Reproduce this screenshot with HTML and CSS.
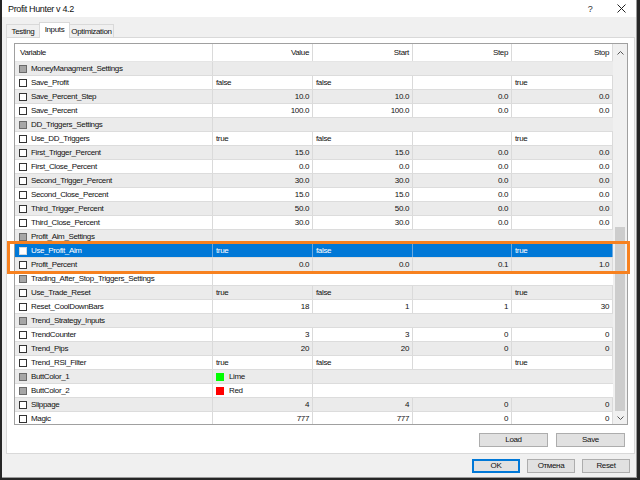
FILE: index.html
```html
<!DOCTYPE html>
<html lang="en">
<head>
  <meta charset="UTF-8">
  <title>Profit Hunter v 4.2</title>
  <link rel="stylesheet" href="styles.css">
</head>
<body>
  <div class="dialog">
    <!-- title bar -->
    <div class="titlebar">
      <span class="title">Profit Hunter v 4.2</span>
      <span class="help">?</span>
      <span class="close">
        <svg width="9" height="9" viewBox="0 0 9 9"><path d="M0.5 0.5 L8.5 8.5 M8.5 0.5 L0.5 8.5" stroke="#222" stroke-width="1" fill="none"/></svg>
      </span>
    </div>

    <!-- tabs -->
    <div class="tabs">
      <div class="tab t-testing">Testing</div>
      <div class="tab t-inputs active">Inputs</div>
      <div class="tab t-optim">Optimization</div>
    </div>

    <div class="panel">
      <div class="list">
        <div class="grid">
          <div class="head">
            <div class="cell">Variable</div>
            <div class="cell num">Value</div>
            <div class="cell num">Start</div>
            <div class="cell num">Step</div>
            <div class="cell num">Stop</div>
          </div>
          <div class="rows">
            <div class="row group"><div class="cell var"><i class="chk grey"></i>MoneyManagment_Settings</div><div class="cell rest"></div></div>
            <div class="row"><div class="cell var"><i class="chk"></i>Save_Profit</div><div class="cell">false</div><div class="cell">false</div><div class="cell"></div><div class="cell">true</div></div>
            <div class="row"><div class="cell var"><i class="chk"></i>Save_Percent_Step</div><div class="cell num">10.0</div><div class="cell num">10.0</div><div class="cell num">0.0</div><div class="cell num">0.0</div></div>
            <div class="row"><div class="cell var"><i class="chk"></i>Save_Percent</div><div class="cell num">100.0</div><div class="cell num">100.0</div><div class="cell num">0.0</div><div class="cell num">0.0</div></div>
            <div class="row group"><div class="cell var"><i class="chk grey"></i>DD_Triggers_Settings</div><div class="cell rest"></div></div>
            <div class="row"><div class="cell var"><i class="chk"></i>Use_DD_Triggers</div><div class="cell">true</div><div class="cell">false</div><div class="cell"></div><div class="cell">true</div></div>
            <div class="row"><div class="cell var"><i class="chk"></i>First_Trigger_Percent</div><div class="cell num">15.0</div><div class="cell num">15.0</div><div class="cell num">0.0</div><div class="cell num">0.0</div></div>
            <div class="row"><div class="cell var"><i class="chk"></i>First_Close_Percent</div><div class="cell num">0.0</div><div class="cell num">0.0</div><div class="cell num">0.0</div><div class="cell num">0.0</div></div>
            <div class="row"><div class="cell var"><i class="chk"></i>Second_Trigger_Percent</div><div class="cell num">30.0</div><div class="cell num">30.0</div><div class="cell num">0.0</div><div class="cell num">0.0</div></div>
            <div class="row"><div class="cell var"><i class="chk"></i>Second_Close_Percent</div><div class="cell num">15.0</div><div class="cell num">15.0</div><div class="cell num">0.0</div><div class="cell num">0.0</div></div>
            <div class="row"><div class="cell var"><i class="chk"></i>Third_Trigger_Percent</div><div class="cell num">50.0</div><div class="cell num">50.0</div><div class="cell num">0.0</div><div class="cell num">0.0</div></div>
            <div class="row"><div class="cell var"><i class="chk"></i>Third_Close_Percent</div><div class="cell num">30.0</div><div class="cell num">30.0</div><div class="cell num">0.0</div><div class="cell num">0.0</div></div>
            <div class="row group"><div class="cell var"><i class="chk grey"></i>Profit_Aim_Settings</div><div class="cell rest"></div></div>
            <div class="row sel"><div class="cell var"><i class="chk"></i>Use_Profit_Aim</div><div class="cell">true</div><div class="cell">false</div><div class="cell"></div><div class="cell">true</div></div>
            <div class="row"><div class="cell var"><i class="chk"></i>Profit_Percent</div><div class="cell num">0.0</div><div class="cell num">0.0</div><div class="cell num">0.1</div><div class="cell num">1.0</div></div>
            <div class="row group"><div class="cell var"><i class="chk grey"></i>Trading_After_Stop_Triggers_Settings</div><div class="cell rest"></div></div>
            <div class="row"><div class="cell var"><i class="chk"></i>Use_Trade_Reset</div><div class="cell">true</div><div class="cell">false</div><div class="cell"></div><div class="cell">true</div></div>
            <div class="row"><div class="cell var"><i class="chk"></i>Reset_CoolDownBars</div><div class="cell num">18</div><div class="cell num">1</div><div class="cell num">1</div><div class="cell num">30</div></div>
            <div class="row group"><div class="cell var"><i class="chk grey"></i>Trend_Strategy_Inputs</div><div class="cell rest"></div></div>
            <div class="row"><div class="cell var"><i class="chk"></i>TrendCounter</div><div class="cell num">3</div><div class="cell num">3</div><div class="cell num">0</div><div class="cell num">0</div></div>
            <div class="row"><div class="cell var"><i class="chk"></i>Trend_Pips</div><div class="cell num">20</div><div class="cell num">20</div><div class="cell num">0</div><div class="cell num">0</div></div>
            <div class="row"><div class="cell var"><i class="chk"></i>Trend_RSI_Filter</div><div class="cell">true</div><div class="cell">false</div><div class="cell"></div><div class="cell">true</div></div>
            <div class="row"><div class="cell var"><i class="chk grey"></i>ButtColor_1</div><div class="cell"><i class="swatch lime"></i>Lime</div><div class="cell rest3"></div></div>
            <div class="row"><div class="cell var"><i class="chk grey"></i>ButtColor_2</div><div class="cell"><i class="swatch red"></i>Red</div><div class="cell rest3"></div></div>
            <div class="row"><div class="cell var"><i class="chk"></i>Slippage</div><div class="cell num">4</div><div class="cell num">4</div><div class="cell num">0</div><div class="cell num">0</div></div>
            <div class="row"><div class="cell var"><i class="chk"></i>Magic</div><div class="cell num">777</div><div class="cell num">777</div><div class="cell num">0</div><div class="cell num">0</div></div>
          </div>
        </div>
        <!-- vertical scrollbar -->
        <div class="sb">
          <div class="sb-up"><svg width="7" height="4" viewBox="0 0 7 4"><path d="M0.5 3.5 L3.5 0.5 L6.5 3.5" stroke="#555" fill="none"/></svg></div>
          <div class="sb-track"><div class="sb-thumb"></div></div>
          <div class="sb-down"><svg width="7" height="4" viewBox="0 0 7 4"><path d="M0.5 0.5 L3.5 3.5 L6.5 0.5" stroke="#555" fill="none"/></svg></div>
        </div>
      </div>
      <div class="panel-foot">
        <button class="btn wide">Load</button>
        <button class="btn wide">Save</button>
      </div>
    </div>

    <div class="dialog-foot">
      <button class="btn default">OK</button>
      <button class="btn">Отмена</button>
      <button class="btn">Reset</button>
    </div>
  </div>

  <!-- orange highlight around the two rows -->
  <div class="mark"></div>
</body>
</html>
```

FILE: styles.css
```css
body {
  margin: 0;
  background: #262626;
  font-family: "Liberation Sans", Arial, sans-serif;
  font-size: 8px;
  letter-spacing: -0.35px;
  color: #111;
  overflow: hidden;
}

.dialog {
  margin-left: 2px;
  width: 635px;
  height: 478px;
  box-sizing: border-box;
  background: #f0f0f0;
  border-right: 1px solid #9a9a9a;
  border-bottom: 1px solid #9a9a9a;
  display: flex;
  flex-direction: column;
}

/* title bar */
.titlebar {
  height: 17px;
  flex: none;
  background: #fff;
  display: flex;
  align-items: center;
  padding-left: 6px;
}

.title {
  flex: 1;
  font-size: 9px;
}

.help {
  width: 30px;
  margin-right: 2px;
  text-align: center;
  font-size: 9px;
  color: #333;
}

.close {
  width: 29px;
  display: flex;
  justify-content: center;
}

/* tabs */
.tabs {
  height: 20px;
  flex: none;
  display: flex;
  align-items: flex-end;
  padding-left: 4px;
}

.tab {
  height: 13px;
  line-height: 13px;
  box-sizing: border-box;
  text-align: center;
  border: 1px solid #d9d9d9;
  border-bottom: none;
  background: #f0f0f0;
}

.t-testing {
  width: 33px;
  border-right: none;
}

.t-inputs {
  width: 31px;
}

.t-optim {
  width: 44px;
  border-left: none;
}

.tab.active {
  height: 16px;
  line-height: 14px;
  background: #fff;
  margin-bottom: -1px;
  position: relative;
  z-index: 1;
}

.panel {
  margin: 0 1px 0 4px;
  height: 417px;
  flex: none;
  box-sizing: border-box;
  background: #fff;
  border: 1px solid #d9d9d9;
  padding: 5px 6px 0 7px;
}

/* list view */
.list {
  width: 614px;
  height: 382px;
  box-sizing: border-box;
  border: 1px solid #a0a0a0;
  display: flex;
  overflow: hidden;
}

.grid {
  width: 598px;
  flex: none;
  overflow: hidden;
}

.head,
.row {
  display: grid;
  grid-template-columns: 198px 100px 100px 99px 101px;
  box-sizing: border-box;
}

.head {
  height: 18px;
  background: #fff;
  border-bottom: 1px solid #e5e5e5;
}

.head .cell {
  line-height: 17px;
}

.head .cell:first-child {
  padding-left: 5px;
}

.row {
  height: 14px;
  border-bottom: 1px solid #dcdcdc;
  background: #fff;
}

.rows .row:nth-child(odd) {
  background: #ebebeb;
}

.cell {
  box-sizing: border-box;
  border-right: 1px solid #dadada;
  padding: 0 3px;
  line-height: 13px;
  white-space: nowrap;
  overflow: hidden;
  display: flex;
  align-items: center;
}

.cell.num {
  justify-content: flex-end;
}

.cell.var {
  padding-left: 4px;
}

.cell.rest {
  grid-column: span 4;
  border-right: none;
}

.cell.rest3 {
  grid-column: span 3;
  border-right: none;
}

.rows .row.sel {
  background: #0078d7;
  color: #fff;
}

.row.sel .cell {
  border-right-color: #6aa8e0;
}

.chk {
  width: 8px;
  height: 8px;
  box-sizing: border-box;
  border: 1px solid #333;
  background: #fff;
  margin-right: 4px;
  flex: none;
}

.chk.grey {
  border-color: #6a6a6a;
  background: #a6a6a6;
}

.row.sel .chk {
  border-color: #d8d8d8;
}

.swatch {
  width: 8px;
  height: 8px;
  margin: 0 5px 0 0;
  flex: none;
}

.swatch.lime {
  background: #00ff00;
}

.swatch.red {
  background: #ff0000;
}

/* scrollbar */
.sb {
  width: 14px;
  flex: none;
  background: #f0f0f0;
  display: flex;
  flex-direction: column;
}

.sb-up {
  height: 17px;
  display: flex;
  align-items: center;
  justify-content: center;
}

.sb-track {
  flex: 1;
  display: flex;
  flex-direction: column;
  justify-content: flex-end;
}

.sb-thumb {
  height: 184px;
  margin: 0 2px;
  background: #cdcdcd;
}

.sb-down {
  height: 13px;
  display: flex;
  align-items: center;
  justify-content: center;
}

/* buttons */
.panel-foot {
  display: flex;
  justify-content: flex-end;
  gap: 8px;
  margin: 8px 3px 0 0;
}

.dialog-foot {
  display: flex;
  justify-content: flex-end;
  gap: 7px;
  margin-top: 5px;
  padding-right: 6px;
}

.btn {
  width: 48px;
  height: 14px;
  padding: 0;
  box-sizing: border-box;
  background: #e1e1e1;
  border: 1px solid #adadad;
  font-family: inherit;
  font-size: 8px;
  letter-spacing: -0.35px;
  line-height: 12px;
  color: #111;
}

.btn.wide {
  width: 69px;
}

.btn.default {
  border-color: #0078d7;
  box-shadow: inset 0 0 0 1px #0078d7;
}

.mark {
  position: absolute;
  left: 7px;
  top: 241px;
  width: 623px;
  height: 33px;
  box-sizing: border-box;
  border: 3px solid #f7811f;
}
```
